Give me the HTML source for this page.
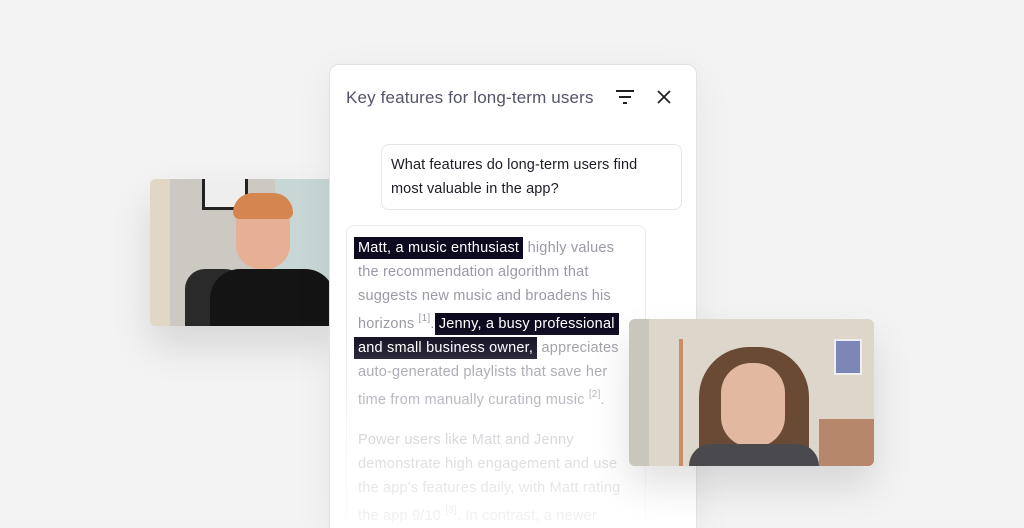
<!DOCTYPE html>
<html style="width:1024px;height:528px;overflow:hidden"><head><style>
*{margin:0;padding:0;box-sizing:border-box}
body{width:1024px;height:528px;background:#f3f3f4;position:relative;overflow:hidden;font-family:"Liberation Sans",sans-serif}
.vid{position:absolute;border-radius:6px;overflow:hidden;box-shadow:0 20px 40px rgba(0,0,0,.12)}
.panel{position:absolute;left:329px;top:64px;width:368px;height:464px;background:#fff;border:1px solid #e2e2e6;border-bottom:none;border-radius:10px 10px 0 0;box-shadow:0 10px 40px rgba(0,0,0,.06);overflow:hidden}
.title{position:absolute;left:16px;top:23px;font-size:17px;color:#54546a;letter-spacing:.15px}
.q{position:absolute;left:51px;top:79px;width:301px;height:66px;border:1px solid #e6e6ea;border-radius:8px;padding:8px 9px;font-size:14.5px;line-height:24px;color:#1c1c28;white-space:nowrap;letter-spacing:.1px}
.a{position:absolute;left:16px;top:160px;width:300px;height:300px;border:1px solid #ececf0;border-bottom:none;border-radius:8px 8px 0 0;padding:10px 11px;font-size:14.5px;color:#9a9aa6;white-space:nowrap;letter-spacing:.2px;overflow:hidden}
.l{display:block;height:24px;line-height:24px}
.t{height:28px;line-height:32px}
.h{background:#0d0a1f;color:#fff;padding:3px 4px;margin:0 -4px 0 -4px}
sup{font-size:10px;vertical-align:7px;line-height:0}
.p2{color:#b4b4be;margin-top:16px}
.fade{position:absolute;left:0;right:0;bottom:0;height:200px;background:linear-gradient(rgba(255,255,255,0),rgba(255,255,255,.85))}
</style></head><body>
<div class="vid" style="left:150px;top:179px;width:185px;height:147px;background:#ccc9c2">
<div style="position:absolute;left:0;top:0;width:20px;height:147px;background:#e0d8c4"></div>
<div style="position:absolute;left:52px;top:0;width:46px;height:31px;border:3px solid #222;border-top:none;background:#eee"></div>
<div style="position:absolute;left:125px;top:0;width:60px;height:100px;background:#c8d6d6"></div>
<div style="position:absolute;left:35px;top:90px;width:60px;height:57px;border-radius:20px 20px 0 0;background:#2a2a2a"></div>
<div style="position:absolute;left:60px;top:90px;width:125px;height:57px;border-radius:30px 30px 0 0;background:#141414"></div>
<div style="position:absolute;left:86px;top:20px;width:54px;height:70px;border-radius:24px;background:#e7b094"></div>
<div style="position:absolute;left:83px;top:14px;width:60px;height:26px;border-radius:30px 30px 10px 10px;background:#d4864e"></div>
</div>
<div class="panel">
<div class="title">Key features for long-term users</div>
<svg style="position:absolute;left:285px;top:24px" width="20" height="16" viewBox="0 0 20 16"><path d="M1 2h18M4 8h12M8 14h4" stroke="#222" stroke-width="2"/></svg>
<svg style="position:absolute;left:327px;top:25px" width="14" height="14" viewBox="0 0 14 14"><path d="M1 1l12 12M13 1L1 13" stroke="#222" stroke-width="1.8"/></svg>
<div class="q">What features do long-term users find<br>most valuable in the app?</div>
<div class="a">
<span class="l"><span class="h">Matt, a music enthusiast</span>&nbsp; highly values</span>
<span class="l">the recommendation algorithm that</span>
<span class="l">suggests new music and broadens his</span>
<span class="l t">horizons <sup>[1]</sup>. <span class="h">Jenny, a busy professional</span></span>
<span class="l"><span class="h">and small business owner,</span>&nbsp; appreciates</span>
<span class="l">auto-generated playlists that save her</span>
<span class="l t">time from manually curating music <sup>[2]</sup>.</span>
<div class="p2">
<span class="l">Power users like Matt and Jenny</span>
<span class="l">demonstrate high engagement and use</span>
<span class="l">the app's features daily, with Matt rating</span>
<span class="l t">the app 9/10 <sup>[3]</sup>. In contrast, a newer</span>
</div></div>
<div class="fade"></div>
</div>
<div class="vid" style="left:629px;top:319px;width:245px;height:147px;background:#dcd6cb">
<div style="position:absolute;left:0;top:0;width:20px;height:147px;background:#c9c6bd"></div>
<div style="position:absolute;left:50px;top:20px;width:4px;height:127px;background:#c98d6a"></div>
<div style="position:absolute;left:205px;top:20px;width:28px;height:36px;background:#7e86b8;border:2px solid #eee"></div>
<div style="position:absolute;left:190px;top:100px;width:55px;height:47px;background:#b6876a"></div>
<div style="position:absolute;left:70px;top:28px;width:110px;height:119px;border-radius:50px 50px 20px 20px;background:#6a4a34"></div>
<div style="position:absolute;left:92px;top:44px;width:64px;height:84px;border-radius:30px;background:#e3b8a0"></div>
<div style="position:absolute;left:60px;top:125px;width:130px;height:22px;border-radius:40px 40px 0 0;background:#4a4a4e"></div>
</div>
</body></html>
